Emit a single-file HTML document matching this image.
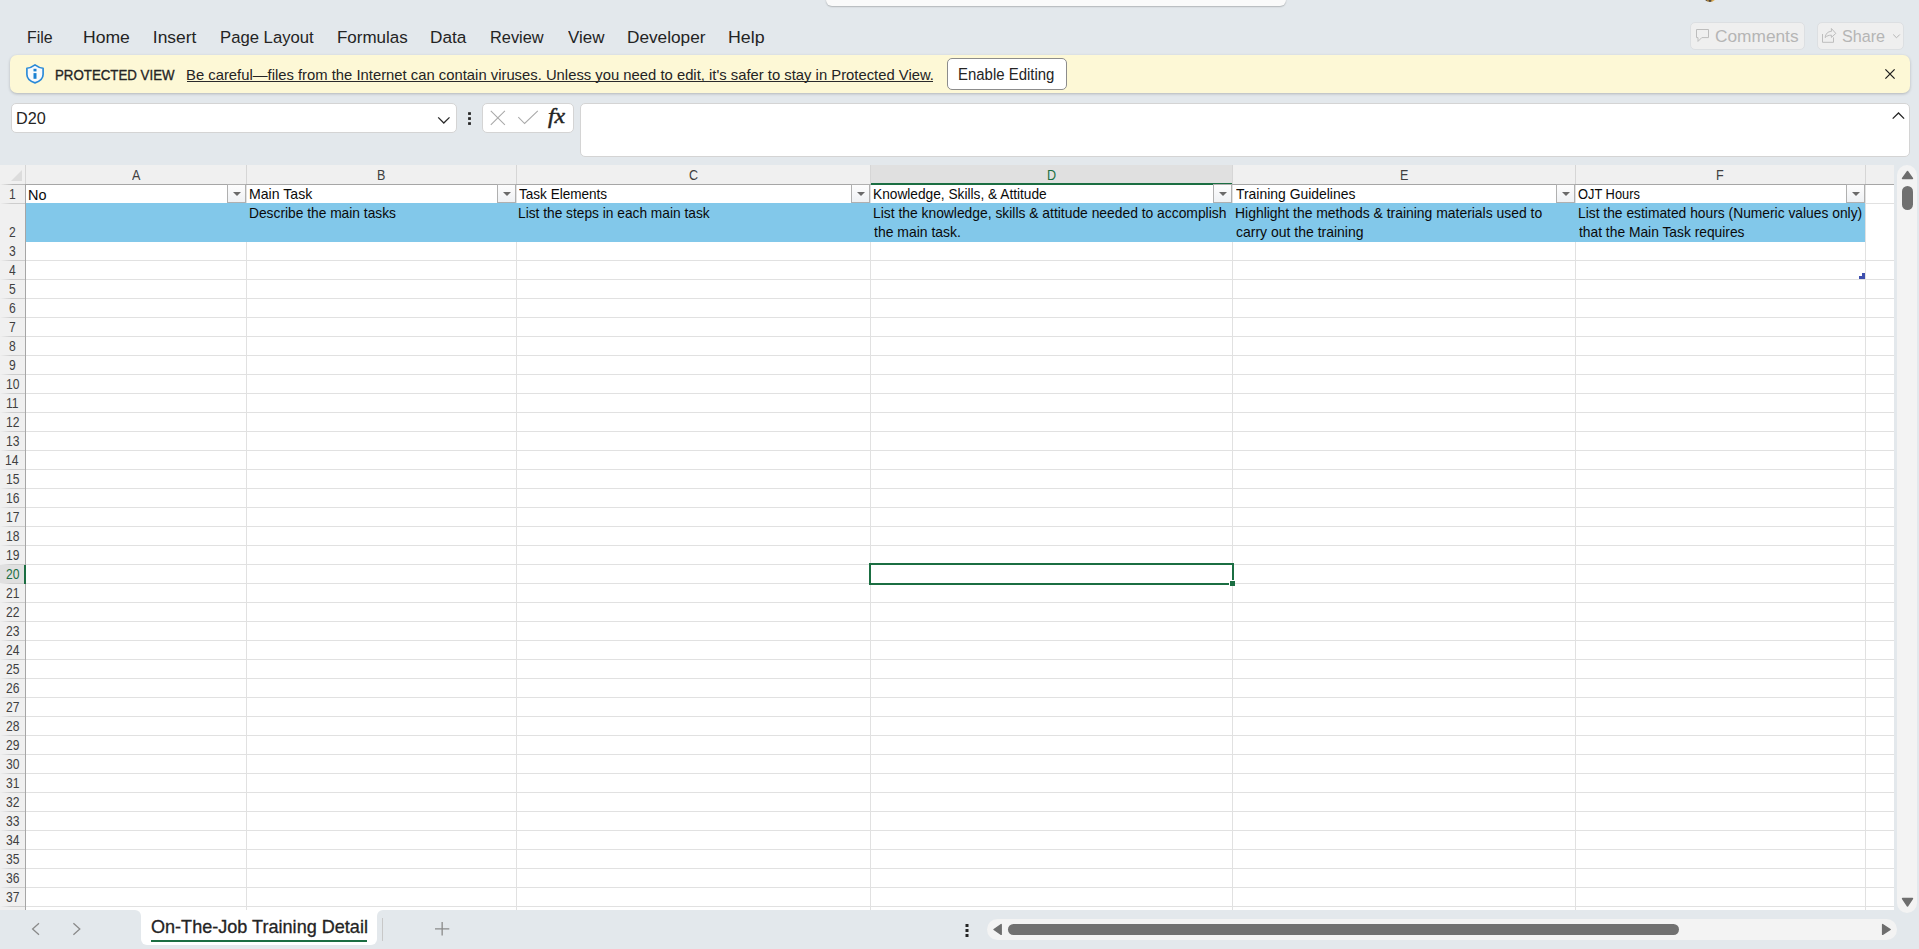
<!DOCTYPE html>
<html><head><meta charset="utf-8">
<style>
*{margin:0;padding:0;box-sizing:border-box}
html,body{width:1919px;height:949px;overflow:hidden}
body{background:#e3e8ec;font-family:"Liberation Sans",sans-serif;position:relative;color:#242424}
.a{position:absolute}
.t{position:absolute;white-space:nowrap;line-height:1}
.dd{position:absolute;top:184px;width:19px;height:19px;border:1px solid #b0b0b0;background:linear-gradient(#fdfdfd,#eff1f4)}
.dd:after{content:"";position:absolute;left:4.5px;top:7px;border-left:4.5px solid transparent;border-right:4.5px solid transparent;border-top:4.5px solid #6a6a6a}
</style></head><body>

<div class="a" style="left:826px;top:-12px;width:460px;height:18px;background:#fafafa;border-radius:6px;box-shadow:0 1px 1.5px rgba(0,0,0,.22)"></div>
<div class="a" style="left:1703px;top:-12px;width:14px;height:14px;border-radius:50%;background:linear-gradient(90deg,#d9a84f 0,#2a2a30 20%,#c9953e 35%,#2f2f35 50%,#d7a64a 65%,#e8c070 100%)"></div>
<div class="t" style="left:26.53px;top:29.00px;font-size:17.40px;color:#242424;transform:scaleX(0.9141);transform-origin:0 0;">File</div>
<div class="t" style="left:83.39px;top:29.00px;font-size:17.40px;color:#242424;transform:scaleX(1.0094);transform-origin:0 0;">Home</div>
<div class="t" style="left:152.83px;top:29.00px;font-size:17.40px;color:#242424;">Insert</div>
<div class="t" style="left:220.16px;top:29.00px;font-size:17.40px;color:#242424;transform:scaleX(0.9594);transform-origin:0 0;">Page Layout</div>
<div class="t" style="left:337.34px;top:29.00px;font-size:17.40px;color:#242424;transform:scaleX(0.9765);transform-origin:0 0;">Formulas</div>
<div class="t" style="left:430.22px;top:29.00px;font-size:17.40px;color:#242424;transform:scaleX(0.9884);transform-origin:0 0;">Data</div>
<div class="t" style="left:489.69px;top:29.00px;font-size:17.40px;color:#242424;transform:scaleX(0.9411);transform-origin:0 0;">Review</div>
<div class="t" style="left:568.30px;top:29.00px;font-size:17.40px;color:#242424;transform:scaleX(0.9757);transform-origin:0 0;">View</div>
<div class="t" style="left:627.22px;top:29.00px;font-size:17.40px;color:#242424;transform:scaleX(0.9898);transform-origin:0 0;">Developer</div>
<div class="t" style="left:728.28px;top:29.00px;font-size:17.40px;color:#242424;transform:scaleX(1.0217);transform-origin:0 0;">Help</div>
<div class="a" style="left:1690px;top:22px;width:115px;height:28px;background:#efefef;border:1px solid #dcdfe2;border-radius:5px"></div>
<div class="t" style="left:1714.63px;top:29.00px;font-size:16.80px;color:#b5b5b5;transform:scaleX(1.0301);transform-origin:0 0;">Comments</div>
<div class="a" style="left:1817px;top:22px;width:87px;height:28px;background:#efefef;border:1px solid #dcdfe2;border-radius:5px"></div>
<div class="t" style="left:1841.77px;top:29.00px;font-size:16.80px;color:#b5b5b5;transform:scaleX(0.9621);transform-origin:0 0;">Share</div>
<div class="a" style="left:10px;top:55px;width:1900px;height:38px;background:#fdf8d6;border-radius:7px;box-shadow:0 1px 3px rgba(0,0,0,.22)"></div>
<div class="t" style="left:55.24px;top:67.00px;font-size:15.20px;color:#242424;transform:scaleX(0.8747);transform-origin:0 0;-webkit-text-stroke:0.35px #242424;">PROTECTED VIEW</div>
<div class="t" style="left:185.81px;top:68.00px;font-size:14.40px;color:#242424;transform:scaleX(1.0297);transform-origin:0 0;">Be careful—files from the Internet can contain viruses. Unless you need to edit, it&#x27;s safer to stay in Protected View.</div>
<div class="a" style="left:187px;top:81px;width:746px;height:1px;background:#2a2a2a"></div>
<div class="a" style="left:947px;top:58px;width:120px;height:32px;background:#fff;border:1px solid #8c8c8c;border-radius:5px"></div>
<div class="t" style="left:957.70px;top:67.00px;font-size:16.00px;color:#242424;transform:scaleX(0.9340);transform-origin:0 0;">Enable Editing</div>
<div class="a" style="left:11px;top:103px;width:446px;height:30px;background:#fff;border:1px solid #d4d4d4;border-radius:5px"></div>
<div class="t" style="left:16.40px;top:111.00px;font-size:16.00px;color:#242424;transform:scaleX(1.0138);transform-origin:0 0;">D20</div>
<div class="a" style="left:482px;top:103px;width:92px;height:30px;background:#fff;border:1px solid #d4d4d4;border-radius:5px"></div>
<div class="a" style="left:580px;top:103px;width:1330px;height:54px;background:#fff;border:1px solid #d4d4d4;border-radius:5px"></div>
<div class="a" style="left:0;top:165px;width:1894px;height:745px;background:#fff"></div>
<div class="a" style="left:0;top:165px;width:1894px;height:19px;background:#f0f0f0"></div>
<div class="a" style="left:871px;top:165px;width:361px;height:19px;background:#e0e0e0"></div>
<div class="a" style="left:0;top:184px;width:25px;height:726px;background:#f0f0f0"></div>
<div class="a" style="left:11px;top:170px;width:0;height:0;border-left:11px solid transparent;border-bottom:11px solid #dcdcdc"></div>
<div class="a" style="left:26px;top:203px;width:1868px;height:1px;background:#e1e1e1"></div>
<div class="a" style="left:0;top:203px;width:25px;height:1px;background:linear-gradient(90deg,rgba(205,205,205,0),#cdcdcd 45%)"></div>
<div class="a" style="left:26px;top:260px;width:1868px;height:1px;background:#e1e1e1"></div>
<div class="a" style="left:0;top:260px;width:25px;height:1px;background:linear-gradient(90deg,rgba(205,205,205,0),#cdcdcd 45%)"></div>
<div class="a" style="left:26px;top:279px;width:1868px;height:1px;background:#e1e1e1"></div>
<div class="a" style="left:0;top:279px;width:25px;height:1px;background:linear-gradient(90deg,rgba(205,205,205,0),#cdcdcd 45%)"></div>
<div class="a" style="left:26px;top:298px;width:1868px;height:1px;background:#e1e1e1"></div>
<div class="a" style="left:0;top:298px;width:25px;height:1px;background:linear-gradient(90deg,rgba(205,205,205,0),#cdcdcd 45%)"></div>
<div class="a" style="left:26px;top:317px;width:1868px;height:1px;background:#e1e1e1"></div>
<div class="a" style="left:0;top:317px;width:25px;height:1px;background:linear-gradient(90deg,rgba(205,205,205,0),#cdcdcd 45%)"></div>
<div class="a" style="left:26px;top:336px;width:1868px;height:1px;background:#e1e1e1"></div>
<div class="a" style="left:0;top:336px;width:25px;height:1px;background:linear-gradient(90deg,rgba(205,205,205,0),#cdcdcd 45%)"></div>
<div class="a" style="left:26px;top:355px;width:1868px;height:1px;background:#e1e1e1"></div>
<div class="a" style="left:0;top:355px;width:25px;height:1px;background:linear-gradient(90deg,rgba(205,205,205,0),#cdcdcd 45%)"></div>
<div class="a" style="left:26px;top:374px;width:1868px;height:1px;background:#e1e1e1"></div>
<div class="a" style="left:0;top:374px;width:25px;height:1px;background:linear-gradient(90deg,rgba(205,205,205,0),#cdcdcd 45%)"></div>
<div class="a" style="left:26px;top:393px;width:1868px;height:1px;background:#e1e1e1"></div>
<div class="a" style="left:0;top:393px;width:25px;height:1px;background:linear-gradient(90deg,rgba(205,205,205,0),#cdcdcd 45%)"></div>
<div class="a" style="left:26px;top:412px;width:1868px;height:1px;background:#e1e1e1"></div>
<div class="a" style="left:0;top:412px;width:25px;height:1px;background:linear-gradient(90deg,rgba(205,205,205,0),#cdcdcd 45%)"></div>
<div class="a" style="left:26px;top:431px;width:1868px;height:1px;background:#e1e1e1"></div>
<div class="a" style="left:0;top:431px;width:25px;height:1px;background:linear-gradient(90deg,rgba(205,205,205,0),#cdcdcd 45%)"></div>
<div class="a" style="left:26px;top:450px;width:1868px;height:1px;background:#e1e1e1"></div>
<div class="a" style="left:0;top:450px;width:25px;height:1px;background:linear-gradient(90deg,rgba(205,205,205,0),#cdcdcd 45%)"></div>
<div class="a" style="left:26px;top:469px;width:1868px;height:1px;background:#e1e1e1"></div>
<div class="a" style="left:0;top:469px;width:25px;height:1px;background:linear-gradient(90deg,rgba(205,205,205,0),#cdcdcd 45%)"></div>
<div class="a" style="left:26px;top:488px;width:1868px;height:1px;background:#e1e1e1"></div>
<div class="a" style="left:0;top:488px;width:25px;height:1px;background:linear-gradient(90deg,rgba(205,205,205,0),#cdcdcd 45%)"></div>
<div class="a" style="left:26px;top:507px;width:1868px;height:1px;background:#e1e1e1"></div>
<div class="a" style="left:0;top:507px;width:25px;height:1px;background:linear-gradient(90deg,rgba(205,205,205,0),#cdcdcd 45%)"></div>
<div class="a" style="left:26px;top:526px;width:1868px;height:1px;background:#e1e1e1"></div>
<div class="a" style="left:0;top:526px;width:25px;height:1px;background:linear-gradient(90deg,rgba(205,205,205,0),#cdcdcd 45%)"></div>
<div class="a" style="left:26px;top:545px;width:1868px;height:1px;background:#e1e1e1"></div>
<div class="a" style="left:0;top:545px;width:25px;height:1px;background:linear-gradient(90deg,rgba(205,205,205,0),#cdcdcd 45%)"></div>
<div class="a" style="left:26px;top:564px;width:1868px;height:1px;background:#e1e1e1"></div>
<div class="a" style="left:0;top:564px;width:25px;height:1px;background:linear-gradient(90deg,rgba(205,205,205,0),#cdcdcd 45%)"></div>
<div class="a" style="left:26px;top:583px;width:1868px;height:1px;background:#e1e1e1"></div>
<div class="a" style="left:0;top:583px;width:25px;height:1px;background:linear-gradient(90deg,rgba(205,205,205,0),#cdcdcd 45%)"></div>
<div class="a" style="left:26px;top:602px;width:1868px;height:1px;background:#e1e1e1"></div>
<div class="a" style="left:0;top:602px;width:25px;height:1px;background:linear-gradient(90deg,rgba(205,205,205,0),#cdcdcd 45%)"></div>
<div class="a" style="left:26px;top:621px;width:1868px;height:1px;background:#e1e1e1"></div>
<div class="a" style="left:0;top:621px;width:25px;height:1px;background:linear-gradient(90deg,rgba(205,205,205,0),#cdcdcd 45%)"></div>
<div class="a" style="left:26px;top:640px;width:1868px;height:1px;background:#e1e1e1"></div>
<div class="a" style="left:0;top:640px;width:25px;height:1px;background:linear-gradient(90deg,rgba(205,205,205,0),#cdcdcd 45%)"></div>
<div class="a" style="left:26px;top:659px;width:1868px;height:1px;background:#e1e1e1"></div>
<div class="a" style="left:0;top:659px;width:25px;height:1px;background:linear-gradient(90deg,rgba(205,205,205,0),#cdcdcd 45%)"></div>
<div class="a" style="left:26px;top:678px;width:1868px;height:1px;background:#e1e1e1"></div>
<div class="a" style="left:0;top:678px;width:25px;height:1px;background:linear-gradient(90deg,rgba(205,205,205,0),#cdcdcd 45%)"></div>
<div class="a" style="left:26px;top:697px;width:1868px;height:1px;background:#e1e1e1"></div>
<div class="a" style="left:0;top:697px;width:25px;height:1px;background:linear-gradient(90deg,rgba(205,205,205,0),#cdcdcd 45%)"></div>
<div class="a" style="left:26px;top:716px;width:1868px;height:1px;background:#e1e1e1"></div>
<div class="a" style="left:0;top:716px;width:25px;height:1px;background:linear-gradient(90deg,rgba(205,205,205,0),#cdcdcd 45%)"></div>
<div class="a" style="left:26px;top:735px;width:1868px;height:1px;background:#e1e1e1"></div>
<div class="a" style="left:0;top:735px;width:25px;height:1px;background:linear-gradient(90deg,rgba(205,205,205,0),#cdcdcd 45%)"></div>
<div class="a" style="left:26px;top:754px;width:1868px;height:1px;background:#e1e1e1"></div>
<div class="a" style="left:0;top:754px;width:25px;height:1px;background:linear-gradient(90deg,rgba(205,205,205,0),#cdcdcd 45%)"></div>
<div class="a" style="left:26px;top:773px;width:1868px;height:1px;background:#e1e1e1"></div>
<div class="a" style="left:0;top:773px;width:25px;height:1px;background:linear-gradient(90deg,rgba(205,205,205,0),#cdcdcd 45%)"></div>
<div class="a" style="left:26px;top:792px;width:1868px;height:1px;background:#e1e1e1"></div>
<div class="a" style="left:0;top:792px;width:25px;height:1px;background:linear-gradient(90deg,rgba(205,205,205,0),#cdcdcd 45%)"></div>
<div class="a" style="left:26px;top:811px;width:1868px;height:1px;background:#e1e1e1"></div>
<div class="a" style="left:0;top:811px;width:25px;height:1px;background:linear-gradient(90deg,rgba(205,205,205,0),#cdcdcd 45%)"></div>
<div class="a" style="left:26px;top:830px;width:1868px;height:1px;background:#e1e1e1"></div>
<div class="a" style="left:0;top:830px;width:25px;height:1px;background:linear-gradient(90deg,rgba(205,205,205,0),#cdcdcd 45%)"></div>
<div class="a" style="left:26px;top:849px;width:1868px;height:1px;background:#e1e1e1"></div>
<div class="a" style="left:0;top:849px;width:25px;height:1px;background:linear-gradient(90deg,rgba(205,205,205,0),#cdcdcd 45%)"></div>
<div class="a" style="left:26px;top:868px;width:1868px;height:1px;background:#e1e1e1"></div>
<div class="a" style="left:0;top:868px;width:25px;height:1px;background:linear-gradient(90deg,rgba(205,205,205,0),#cdcdcd 45%)"></div>
<div class="a" style="left:26px;top:887px;width:1868px;height:1px;background:#e1e1e1"></div>
<div class="a" style="left:0;top:887px;width:25px;height:1px;background:linear-gradient(90deg,rgba(205,205,205,0),#cdcdcd 45%)"></div>
<div class="a" style="left:26px;top:906px;width:1868px;height:1px;background:#e1e1e1"></div>
<div class="a" style="left:0;top:906px;width:25px;height:1px;background:linear-gradient(90deg,rgba(205,205,205,0),#cdcdcd 45%)"></div>
<div class="a" style="left:246px;top:184px;width:1px;height:726px;background:#e1e1e1"></div>
<div class="a" style="left:246px;top:165px;width:1px;height:19px;background:#d6d6d6"></div>
<div class="a" style="left:516px;top:184px;width:1px;height:726px;background:#e1e1e1"></div>
<div class="a" style="left:516px;top:165px;width:1px;height:19px;background:#d6d6d6"></div>
<div class="a" style="left:870px;top:184px;width:1px;height:726px;background:#e1e1e1"></div>
<div class="a" style="left:870px;top:165px;width:1px;height:19px;background:#d6d6d6"></div>
<div class="a" style="left:1232px;top:184px;width:1px;height:726px;background:#e1e1e1"></div>
<div class="a" style="left:1232px;top:165px;width:1px;height:19px;background:#d6d6d6"></div>
<div class="a" style="left:1575px;top:184px;width:1px;height:726px;background:#e1e1e1"></div>
<div class="a" style="left:1575px;top:165px;width:1px;height:19px;background:#d6d6d6"></div>
<div class="a" style="left:1865px;top:184px;width:1px;height:726px;background:#e1e1e1"></div>
<div class="a" style="left:1865px;top:165px;width:1px;height:19px;background:#d6d6d6"></div>
<div class="a" style="left:25px;top:184px;width:1869px;height:1px;background:#a6a6a6"></div>
<div class="a" style="left:0;top:184px;width:25px;height:1px;background:linear-gradient(90deg,rgba(190,190,190,0),#b8b8b8 50%)"></div>
<div class="a" style="left:25px;top:184px;width:1px;height:726px;background:#a6a6a6"></div>
<div class="a" style="left:25px;top:165px;width:1px;height:19px;background:#d6d6d6"></div>
<div class="a" style="left:871px;top:183px;width:361px;height:2px;background:#1b6e42"></div>
<div class="t" style="left:131.82px;top:168.00px;font-size:14.80px;color:#404040;transform:scaleX(0.8500);transform-origin:0 0;">A</div>
<div class="t" style="left:377.13px;top:168.00px;font-size:14.80px;color:#404040;transform:scaleX(0.8500);transform-origin:0 0;">B</div>
<div class="t" style="left:688.88px;top:168.00px;font-size:14.80px;color:#404040;transform:scaleX(0.8500);transform-origin:0 0;">C</div>
<div class="t" style="left:1046.75px;top:168.00px;font-size:14.80px;color:#1b6e42;transform:scaleX(0.8500);transform-origin:0 0;">D</div>
<div class="t" style="left:1399.57px;top:168.00px;font-size:14.80px;color:#404040;transform:scaleX(0.8500);transform-origin:0 0;">E</div>
<div class="t" style="left:1716.38px;top:168.00px;font-size:14.80px;color:#404040;transform:scaleX(0.8500);transform-origin:0 0;">F</div>
<div class="a" style="left:26px;top:203px;width:1839px;height:39px;background:#82c8ea"></div>
<div class="t" style="left:8.96px;top:187.00px;font-size:14.60px;color:#404040;transform:scaleX(0.8300);transform-origin:0 0;">1</div>
<div class="t" style="left:9.11px;top:225.00px;font-size:14.60px;color:#404040;transform:scaleX(0.8300);transform-origin:0 0;">2</div>
<div class="t" style="left:9.17px;top:244.00px;font-size:14.60px;color:#404040;transform:scaleX(0.8300);transform-origin:0 0;">3</div>
<div class="t" style="left:9.17px;top:263.00px;font-size:14.60px;color:#404040;transform:scaleX(0.8300);transform-origin:0 0;">4</div>
<div class="t" style="left:9.14px;top:282.00px;font-size:14.60px;color:#404040;transform:scaleX(0.8300);transform-origin:0 0;">5</div>
<div class="t" style="left:9.08px;top:301.00px;font-size:14.60px;color:#404040;transform:scaleX(0.8300);transform-origin:0 0;">6</div>
<div class="t" style="left:9.11px;top:320.00px;font-size:14.60px;color:#404040;transform:scaleX(0.8300);transform-origin:0 0;">7</div>
<div class="t" style="left:9.14px;top:339.00px;font-size:14.60px;color:#404040;transform:scaleX(0.8300);transform-origin:0 0;">8</div>
<div class="t" style="left:9.14px;top:358.00px;font-size:14.60px;color:#404040;transform:scaleX(0.8300);transform-origin:0 0;">9</div>
<div class="t" style="left:5.53px;top:377.00px;font-size:14.60px;color:#404040;transform:scaleX(0.8300);transform-origin:0 0;">10</div>
<div class="t" style="left:6.05px;top:396.00px;font-size:14.60px;color:#404040;transform:scaleX(0.8300);transform-origin:0 0;">11</div>
<div class="t" style="left:5.59px;top:415.00px;font-size:14.60px;color:#404040;transform:scaleX(0.8300);transform-origin:0 0;">12</div>
<div class="t" style="left:5.56px;top:434.00px;font-size:14.60px;color:#404040;transform:scaleX(0.8300);transform-origin:0 0;">13</div>
<div class="t" style="left:5.47px;top:453.00px;font-size:14.60px;color:#404040;transform:scaleX(0.8300);transform-origin:0 0;">14</div>
<div class="t" style="left:5.56px;top:472.00px;font-size:14.60px;color:#404040;transform:scaleX(0.8300);transform-origin:0 0;">15</div>
<div class="t" style="left:5.56px;top:491.00px;font-size:14.60px;color:#404040;transform:scaleX(0.8300);transform-origin:0 0;">16</div>
<div class="t" style="left:5.59px;top:510.00px;font-size:14.60px;color:#404040;transform:scaleX(0.8300);transform-origin:0 0;">17</div>
<div class="t" style="left:5.56px;top:529.00px;font-size:14.60px;color:#404040;transform:scaleX(0.8300);transform-origin:0 0;">18</div>
<div class="t" style="left:5.59px;top:548.00px;font-size:14.60px;color:#404040;transform:scaleX(0.8300);transform-origin:0 0;">19</div>
<div class="a" style="left:0;top:565px;width:25px;height:18px;background:#e0e0e0"></div>
<div class="a" style="left:24px;top:565px;width:2px;height:19px;background:#1b6e42"></div>
<div class="t" style="left:5.68px;top:567.00px;font-size:14.60px;color:#1b6e42;transform:scaleX(0.8300);transform-origin:0 0;">20</div>
<div class="t" style="left:5.74px;top:586.00px;font-size:14.60px;color:#404040;transform:scaleX(0.8300);transform-origin:0 0;">21</div>
<div class="t" style="left:5.74px;top:605.00px;font-size:14.60px;color:#404040;transform:scaleX(0.8300);transform-origin:0 0;">22</div>
<div class="t" style="left:5.71px;top:624.00px;font-size:14.60px;color:#404040;transform:scaleX(0.8300);transform-origin:0 0;">23</div>
<div class="t" style="left:5.62px;top:643.00px;font-size:14.60px;color:#404040;transform:scaleX(0.8300);transform-origin:0 0;">24</div>
<div class="t" style="left:5.71px;top:662.00px;font-size:14.60px;color:#404040;transform:scaleX(0.8300);transform-origin:0 0;">25</div>
<div class="t" style="left:5.71px;top:681.00px;font-size:14.60px;color:#404040;transform:scaleX(0.8300);transform-origin:0 0;">26</div>
<div class="t" style="left:5.74px;top:700.00px;font-size:14.60px;color:#404040;transform:scaleX(0.8300);transform-origin:0 0;">27</div>
<div class="t" style="left:5.71px;top:719.00px;font-size:14.60px;color:#404040;transform:scaleX(0.8300);transform-origin:0 0;">28</div>
<div class="t" style="left:5.74px;top:738.00px;font-size:14.60px;color:#404040;transform:scaleX(0.8300);transform-origin:0 0;">29</div>
<div class="t" style="left:5.77px;top:757.00px;font-size:14.60px;color:#404040;transform:scaleX(0.8300);transform-origin:0 0;">30</div>
<div class="t" style="left:5.84px;top:776.00px;font-size:14.60px;color:#404040;transform:scaleX(0.8300);transform-origin:0 0;">31</div>
<div class="t" style="left:5.84px;top:795.00px;font-size:14.60px;color:#404040;transform:scaleX(0.8300);transform-origin:0 0;">32</div>
<div class="t" style="left:5.80px;top:814.00px;font-size:14.60px;color:#404040;transform:scaleX(0.8300);transform-origin:0 0;">33</div>
<div class="t" style="left:5.71px;top:833.00px;font-size:14.60px;color:#404040;transform:scaleX(0.8300);transform-origin:0 0;">34</div>
<div class="t" style="left:5.80px;top:852.00px;font-size:14.60px;color:#404040;transform:scaleX(0.8300);transform-origin:0 0;">35</div>
<div class="t" style="left:5.80px;top:871.00px;font-size:14.60px;color:#404040;transform:scaleX(0.8300);transform-origin:0 0;">36</div>
<div class="t" style="left:5.84px;top:890.00px;font-size:14.60px;color:#404040;transform:scaleX(0.8300);transform-origin:0 0;">37</div>
<div class="t" style="left:28.14px;top:188.00px;font-size:14.20px;color:#0a0a0a;transform:scaleX(1.0182);transform-origin:0 0;">No</div>
<div class="t" style="left:248.97px;top:187.00px;font-size:14.20px;color:#0a0a0a;transform:scaleX(0.9941);transform-origin:0 0;">Main Task</div>
<div class="t" style="left:519.08px;top:187.00px;font-size:14.20px;color:#0a0a0a;transform:scaleX(0.9553);transform-origin:0 0;">Task Elements</div>
<div class="t" style="left:872.75px;top:187.00px;font-size:14.20px;color:#0a0a0a;transform:scaleX(0.9662);transform-origin:0 0;">Knowledge, Skills, &amp; Attitude</div>
<div class="t" style="left:1235.82px;top:187.00px;font-size:14.20px;color:#0a0a0a;transform:scaleX(0.9810);transform-origin:0 0;">Training Guidelines</div>
<div class="t" style="left:1578.32px;top:187.00px;font-size:14.20px;color:#0a0a0a;transform:scaleX(0.9058);transform-origin:0 0;">OJT Hours</div>
<div class="t" style="left:249.00px;top:206.00px;font-size:14.20px;color:#0a0a0a;transform:scaleX(0.9708);transform-origin:0 0;">Describe the main tasks</div>
<div class="t" style="left:518.25px;top:206.00px;font-size:14.20px;color:#0a0a0a;transform:scaleX(0.9682);transform-origin:0 0;">List the steps in each main task</div>
<div class="t" style="left:872.74px;top:206.00px;font-size:14.20px;color:#0a0a0a;transform:scaleX(0.9762);transform-origin:0 0;">List the knowledge, skills &amp; attitude needed to accomplish</div>
<div class="t" style="left:1234.99px;top:206.00px;font-size:14.20px;color:#0a0a0a;transform:scaleX(0.9812);transform-origin:0 0;">Highlight the methods &amp; training materials used to</div>
<div class="t" style="left:1577.79px;top:206.00px;font-size:14.20px;color:#0a0a0a;transform:scaleX(0.9740);transform-origin:0 0;">List the estimated hours (Numeric values only)</div>
<div class="t" style="left:873.64px;top:225.00px;font-size:14.20px;color:#0a0a0a;transform:scaleX(0.9838);transform-origin:0 0;">the main task.</div>
<div class="t" style="left:1235.54px;top:225.00px;font-size:14.20px;color:#0a0a0a;transform:scaleX(0.9862);transform-origin:0 0;">carry out the training</div>
<div class="t" style="left:1578.69px;top:225.00px;font-size:14.20px;color:#0a0a0a;transform:scaleX(0.9732);transform-origin:0 0;">that the Main Task requires</div>
<div class="dd" style="left:227px"></div>
<div class="dd" style="left:497px"></div>
<div class="dd" style="left:851px"></div>
<div class="dd" style="left:1213px"></div>
<div class="dd" style="left:1556px"></div>
<div class="dd" style="left:1846px"></div>
<div class="a" style="left:869px;top:563px;width:365px;height:22px;border:2px solid #1b6e42"></div>
<div class="a" style="left:1229px;top:580px;width:6px;height:6px;background:#fff"></div>
<div class="a" style="left:1230px;top:581px;width:5px;height:5px;background:#1b6e42"></div>
<div class="a" style="left:1859px;top:276px;width:6px;height:3px;background:#3e4fae"></div>
<div class="a" style="left:1862px;top:273px;width:3px;height:6px;background:#3e4fae"></div>
<div class="a" style="left:26px;top:910px;width:1868px;height:9px;background:#fff"></div>
<div class="a" style="left:0;top:910px;width:141px;height:39px;background:#e3e8ec;border-top-right-radius:6px"></div>
<div class="a" style="left:377px;top:910px;width:1542px;height:39px;background:#e3e8ec;border-top-left-radius:6px"></div>
<div class="a" style="left:141px;top:910px;width:236px;height:35px;background:#fff;border-radius:0 0 6px 6px"></div>
<div class="a" style="left:141px;top:945px;width:236px;height:4px;background:#e3e8ec"></div>
<div class="t" style="left:150.69px;top:918.00px;font-size:18.20px;color:#242424;transform:scaleX(0.9936);transform-origin:0 0;-webkit-text-stroke:0.3px #242424;">On-The-Job Training Detail</div>
<div class="a" style="left:151px;top:940px;width:216px;height:2px;background:#1b6e42"></div>
<div class="a" style="left:382px;top:918px;width:1px;height:23px;background:#c8c8c8"></div>
<div class="a" style="left:987px;top:919px;width:910px;height:21px;background:#f3f3f3;border-radius:10.5px"></div>
<div class="a" style="left:1008px;top:924px;width:671px;height:11px;background:#707070;border-radius:5.5px"></div>
<div class="a" style="left:1897px;top:165px;width:20px;height:748px;background:#f3f3f3;border-radius:10px"></div>
<div class="a" style="left:1902px;top:186px;width:11px;height:24px;background:#707070;border-radius:5.5px"></div>
<svg class="a" style="left:0;top:0" width="1919" height="949"><path d="M35 64.9 C32.2 67,29.6 68.1,26.9 68.2 L26.9 74.5 C26.9 78.3,29.8 81.2,35 82.9 C40.2 81.2,43.1 78.3,43.1 74.5 L43.1 68.2 C40.4 68.1,37.8 67,35 64.9 Z" fill="#f9fafc" stroke="#2a8ad8" stroke-width="1.65" stroke-linejoin="round"/><rect x="33.5" y="68.8" width="3" height="2.6" fill="#1b80d2"/><rect x="33.5" y="73.1" width="3" height="5.7" fill="#1b80d2"/><path d="M1885.4 69.4 L1894.6 78.6 M1894.6 69.4 L1885.4 78.6" stroke="#1c1c1c" stroke-width="1.25"/><path d="M438.2 117.4 L443.8 123 L449.5 117.4" fill="none" stroke="#2a2a2a" stroke-width="1.3"/><rect x="468.1" y="112.2" width="2.8" height="2.7" fill="#242424"/><rect x="468.1" y="117.2" width="2.8" height="2.7" fill="#242424"/><rect x="468.1" y="122.2" width="2.8" height="2.7" fill="#242424"/><path d="M490.8 110.8 L504.9 124.9 M504.9 110.8 L490.8 124.9" stroke="#a9a9a9" stroke-width="1.05"/><path d="M518.3 117.1 L524.6 123.5 L537.8 110.8" fill="none" stroke="#a9a9a9" stroke-width="1.05"/><path d="M1892.7 118.6 L1898.5 113 L1904.1 118.6" fill="none" stroke="#242424" stroke-width="1.3"/><path d="M1696.5 29.5 H1708.5 V37.6 H1701.8 L1698 41.4 V37.6 H1696.5 Z" fill="none" stroke="#bdbdbd" stroke-width="1" stroke-linejoin="miter"/><path d="M1822.5 34 V42.3 H1833.5 V37.4" fill="none" stroke="#bdbdbd" stroke-width="1"/><path d="M1825.2 37.6 C1825.6 33.5,1828 31.5,1831.4 31.4 V28.5 L1835.8 33.4 L1831.4 37.4 V35.2 C1829 35.1,1826.8 35.8,1825.2 37.6 Z" fill="none" stroke="#bdbdbd" stroke-width="1" stroke-linejoin="round"/><path d="M1893.2 34.5 L1896.5 37.8 L1899.8 34.5" fill="none" stroke="#b5b5b5" stroke-width="1"/><path d="M1907.5 171.5 L1912.5 178.5 L1902.5 178.5 Z" fill="#6e6e6e" stroke="#6e6e6e" stroke-width="1.4" stroke-linejoin="round"/><path d="M1902.5 898.5 L1912.5 898.5 L1907.5 906 Z" fill="#6e6e6e" stroke="#6e6e6e" stroke-width="1.4" stroke-linejoin="round"/><path d="M1001.2 924.6 L1001.2 934.4 L994 929.5 Z" fill="#6e6e6e" stroke="#6e6e6e" stroke-width="1.4" stroke-linejoin="round"/><path d="M1882.6 924.6 L1882.6 934.4 L1890.2 929.5 Z" fill="#6e6e6e" stroke="#6e6e6e" stroke-width="1.4" stroke-linejoin="round"/><path d="M39 923.2 L32.6 929 L39 934.8" fill="none" stroke="#8a8a8a" stroke-width="1.3"/><path d="M73.4 923.2 L79.8 929 L73.4 934.8" fill="none" stroke="#8a8a8a" stroke-width="1.3"/><path d="M435 928.8 H449.3 M442.15 922 V935.6" stroke="#8a8a8a" stroke-width="1.3"/><rect x="965.5" y="924" width="3" height="3" fill="#242424"/><rect x="965.5" y="929" width="3" height="3" fill="#242424"/><rect x="965.5" y="934" width="3" height="3" fill="#242424"/></svg>
<div class="t" style="left:548px;top:106px;font-family:'Liberation Serif',serif;font-style:italic;font-size:21px;color:#242424;transform:scaleX(1.13);transform-origin:0 0;-webkit-text-stroke:0.45px #242424">fx</div>
</body></html>
